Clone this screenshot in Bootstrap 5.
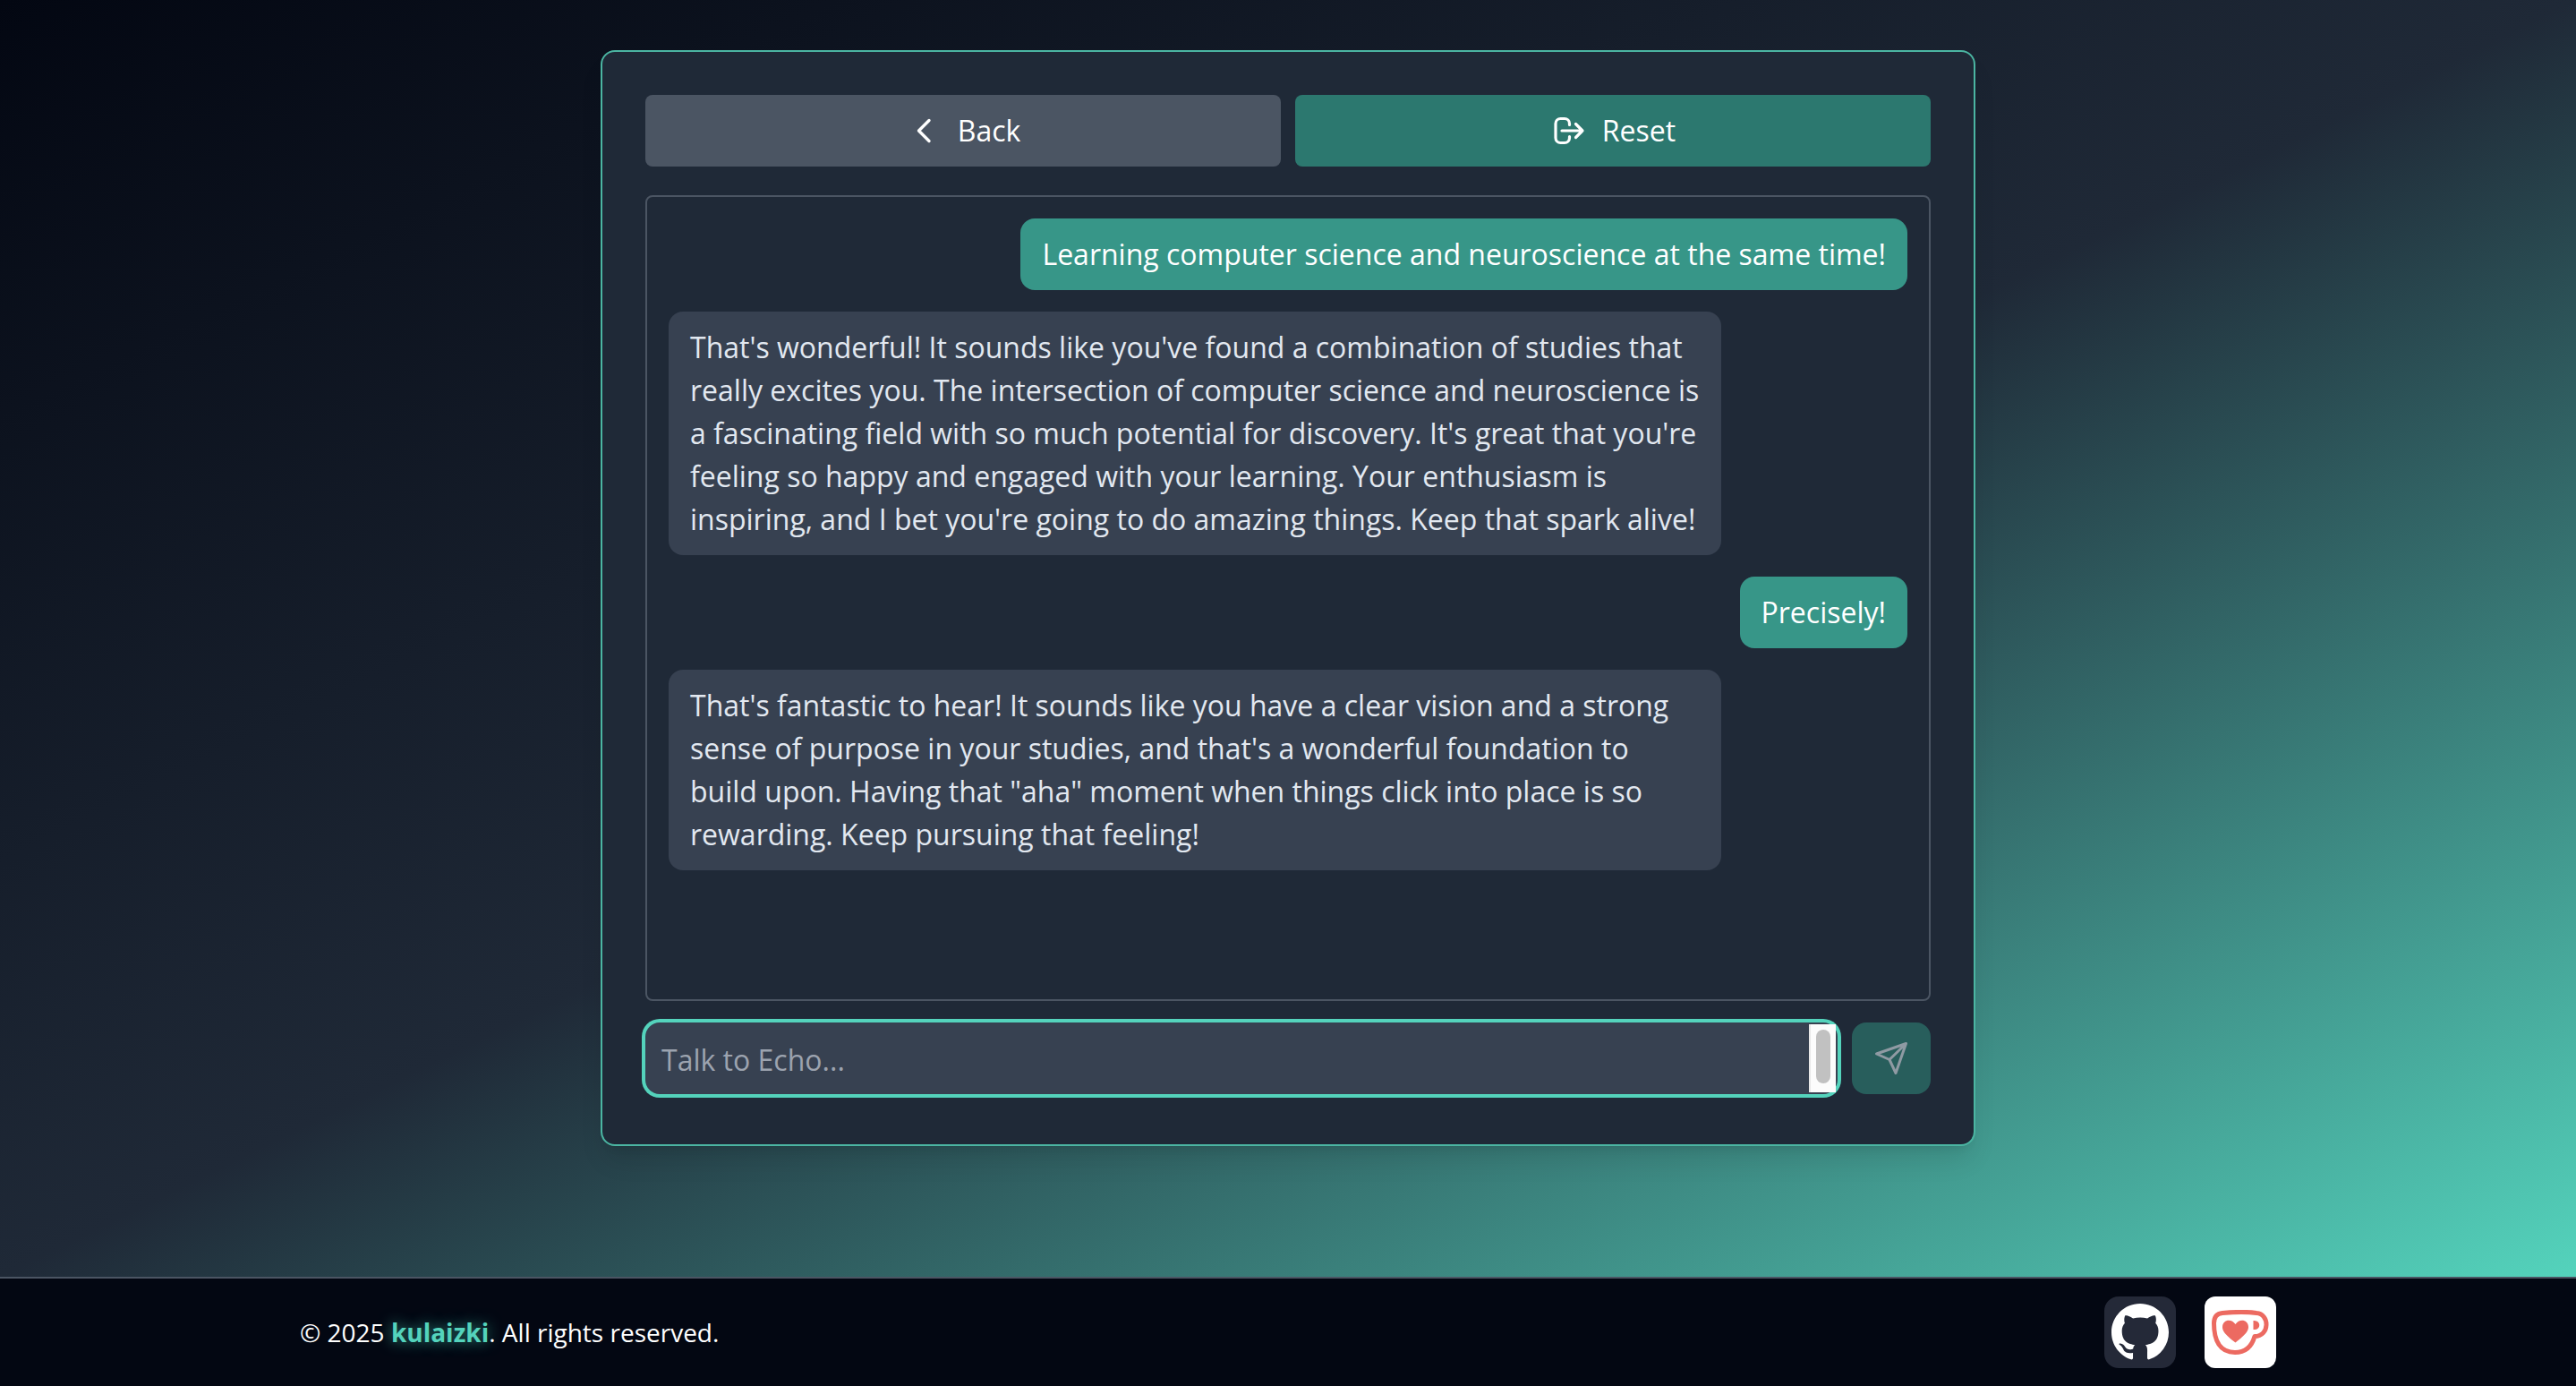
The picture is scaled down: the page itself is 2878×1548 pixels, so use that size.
<!DOCTYPE html>
<html lang="en">
<head>
<meta charset="utf-8">
<meta name="viewport" content="width=device-width, initial-scale=1">
<title>Echo</title>
<link href="https://cdn.jsdelivr.net/npm/bootstrap@5.3.0/dist/css/bootstrap.min.css" rel="stylesheet">
<style>
  body {
    font-family: "Open Sans", "Noto Sans", sans-serif;
    font-size: 32px;
    line-height: 48px;
    color: #fff;
    background: #030712;
  }
  .echo-main {
    padding: 56px 32px 146px;
    background: linear-gradient(to bottom right, #030712, #1f2937, #54d3bc);
  }
  .echo-panel {
    width: 100%;
    max-width: 1536px;
    padding: 48px;
    background: #1f2937;
    border: 2px solid #4bb5a2;
    border-radius: 16px;
    box-shadow: 0 20px 30px -6px rgba(0, 0, 0, .1), 0 8px 12px -8px rgba(0, 0, 0, .1);
  }
  .echo-gap { gap: 16px; }
  .echo-action {
    height: 80px;
    border: 0;
    border-radius: 8px;
    color: #fff;
    font-weight: 500;
    gap: 18px;
  }
  .echo-back { background: #4b5563; }
  .echo-reset { background: #2c786f; }
  .echo-log {
    height: 900px;
    margin: 32px 0 24px;
    padding: 24px;
    gap: 24px;
    border: 2px solid #4b5563;
    border-radius: 8px;
    overflow-y: auto;
  }
  .echo-bubble { max-width: 85%; padding: 16px 24px; border-radius: 16px; }
  .echo-mine { background: #379688; }
  .echo-theirs { background: #374151; color: #e2e8f0; }
  .echo-form { padding-bottom: 8px; }
  .echo-field {
    height: 80px;
    border-radius: 16px;
    background: #374151;
    box-shadow: 0 0 0 4px #54d3bc;
    padding-right: 2px;
  }
  .echo-input {
    height: 80px;
    padding: 18px 18px 12px;
    border: 0;
    background: transparent;
    color: #fff;
    resize: none;
    outline: 0;
    overflow: hidden;
    line-height: 48px;
  }
  .echo-input::placeholder { color: #9ca3af; }
  .echo-track { width: 30px; height: 76px; padding: 6px; background: #fcfcfc; border-left: 2px solid #e8e8e8; }
  .echo-thumb { width: 16px; height: 60px; border-radius: 8px; background: #c1c1c1; }
  .echo-send { width: 88px; height: 80px; border: 0; border-radius: 16px; background: #285e5c; color: #8f9aa3; }
  .echo-footer { background: #030712; border-top: 2px solid #4b5563; font-size: 28px; line-height: 40px; padding: 20px 0; }
  .echo-footer-row { max-width: 2304px; padding: 0 48px; }
  .echo-name { color: #54d3bc; text-shadow: 0 0 16px #379688; }
  .echo-badges { gap: 32px; }
  .echo-git, .echo-kofi { width: 80px; height: 80px; border-radius: 16px; }
  .echo-git { background: #242938; }
  .echo-kofi { background: #fff; border-radius: 12px; }
</style>
<script src="https://cdn.jsdelivr.net/npm/bootstrap@5.3.0/dist/js/bootstrap.bundle.min.js"></script>
</head>
<body class="d-flex flex-column min-vh-100">
<main class="echo-main flex-grow-1 d-flex justify-content-center align-items-start">
  <section class="echo-panel">
    <div class="d-flex echo-gap">
      <button type="button" class="echo-action echo-back flex-fill w-50 d-flex align-items-center justify-content-center">
        <svg width="40" height="40" viewBox="0 0 40 40" fill="none" stroke="currentColor" stroke-width="3.400" stroke-linecap="round" stroke-linejoin="round" aria-hidden="true"><path d="M26 8.500 14.500 20 26 31.500"/></svg>
        <span>Back</span>
      </button>
      <button type="button" class="echo-action echo-reset flex-fill w-50 d-flex align-items-center justify-content-center">
        <svg width="40" height="40" viewBox="0 0 40 40" fill="none" stroke="currentColor" stroke-width="3.200" stroke-linecap="round" stroke-linejoin="round" aria-hidden="true"><path d="M21.500 13.500V12a5.500 5.500 0 0 0-5.500-5.500h-4.500A5.500 5.500 0 0 0 6 12v16a5.500 5.500 0 0 0 5.500 5.500H16a5.500 5.500 0 0 0 5.500-5.500v-1.500M13 20h23M28.500 12.500 36 20l-7.500 7.500"/></svg>
        <span>Reset</span>
      </button>
    </div>
    <div class="echo-log d-flex flex-column">
      <div class="echo-bubble echo-mine align-self-end">Learning computer science and neuroscience at the same time!</div>
      <div class="echo-bubble echo-theirs align-self-start">That's wonderful! It sounds like you've found a combination of studies that really excites you. The intersection of computer science and neuroscience is a fascinating field with so much potential for discovery. It's great that you're feeling so happy and engaged with your learning. Your enthusiasm is inspiring, and I bet you're going to do amazing things. Keep that spark alive!</div>
      <div class="echo-bubble echo-mine align-self-end">Precisely!</div>
      <div class="echo-bubble echo-theirs align-self-start">That's fantastic to hear! It sounds like you have a clear vision and a strong sense of purpose in your studies, and that's a wonderful foundation to build upon. Having that "aha" moment when things click into place is so rewarding. Keep pursuing that feeling!</div>
    </div>
    <form class="echo-form d-flex echo-gap">
      <div class="echo-field flex-grow-1 d-flex align-items-center">
        <textarea class="echo-input flex-grow-1" rows="1" placeholder="Talk to Echo..." aria-label="Talk to Echo"></textarea>
        <div class="echo-track" aria-hidden="true"><div class="echo-thumb"></div></div>
      </div>
      <button type="submit" class="echo-send d-flex align-items-center justify-content-center" aria-label="Send" disabled>
        <svg width="40" height="40" viewBox="0 0 40 40" fill="none" stroke="currentColor" stroke-width="3" stroke-linejoin="round" stroke-linecap="round" aria-hidden="true"><path d="M36.500 3.500 3.500 15 18 21.500 25 36.500ZM18 21.500 36.500 3.500"/></svg>
      </button>
    </form>
  </section>
</main>
<footer class="echo-footer">
  <div class="echo-footer-row mx-auto d-flex align-items-center justify-content-between">
    <p class="mb-0">© 2025 <strong class="echo-name">kulaizki</strong>. All rights reserved.</p>
    <div class="d-flex echo-badges">
      <a href="#" class="echo-git d-flex align-items-center justify-content-center" aria-label="GitHub">
        <svg width="64" height="64" viewBox="0 0 16 16" fill="#fff" aria-hidden="true"><path d="M8 0C3.580 0 0 3.580 0 8c0 3.540 2.290 6.530 5.470 7.590.4.070.55-.17.55-.38 0-.19-.01-.82-.01-1.490-2.010.37-2.530-.49-2.690-.94-.09-.23-.48-.94-.82-1.130-.28-.15-.68-.52-.01-.53.63-.01 1.080.58 1.230.82.72 1.210 1.870.87 2.330.66.070-.52.28-.87.51-1.070-1.780-.2-3.640-.89-3.640-3.950 0-.87.31-1.590.82-2.150-.08-.2-.36-1.020.08-2.120 0 0 .67-.21 2.200.82.64-.18 1.320-.27 2-.27s1.360.09 2 .27c1.530-1.040 2.200-.82 2.200-.82.44 1.100.16 1.920.08 2.120.51.56.82 1.270.82 2.150 0 3.070-1.870 3.750-3.650 3.950.29.25.54.73.54 1.480 0 1.070-.01 1.930-.01 2.200 0 .21.15.46.55.38A8.010 8.010 0 0 0 16 8c0-4.420-3.580-8-8-8"/></svg>
      </a>
      <a href="#" class="echo-kofi d-flex align-items-center justify-content-center" aria-label="Ko-fi">
        <svg width="64" height="50" viewBox="0 0 64 50" aria-hidden="true">
          <path d="M12 3.500C28 2 40 2 50 3.500c15 1 15 26-2 26C45 40 38 47.500 26 47.500 9 47.500 2.500 34 2.500 15 2.500 8 6 4 12 3.500Z" fill="none" stroke="#ec6a61" stroke-width="5" stroke-linejoin="round"/>
          <path d="M26.500 36.500C14 27 12 23 12 19c0-8 10-10 14.500-3C31 9 41 11 41 19c0 4-2 8-14.500 17.500Z" fill="#ec6a61"/>
          <path d="M46.500 12c9-1 9 11 0 10Z" fill="#ec6a61"/>
        </svg>
      </a>
    </div>
  </div>
</footer>
</body>
</html>
